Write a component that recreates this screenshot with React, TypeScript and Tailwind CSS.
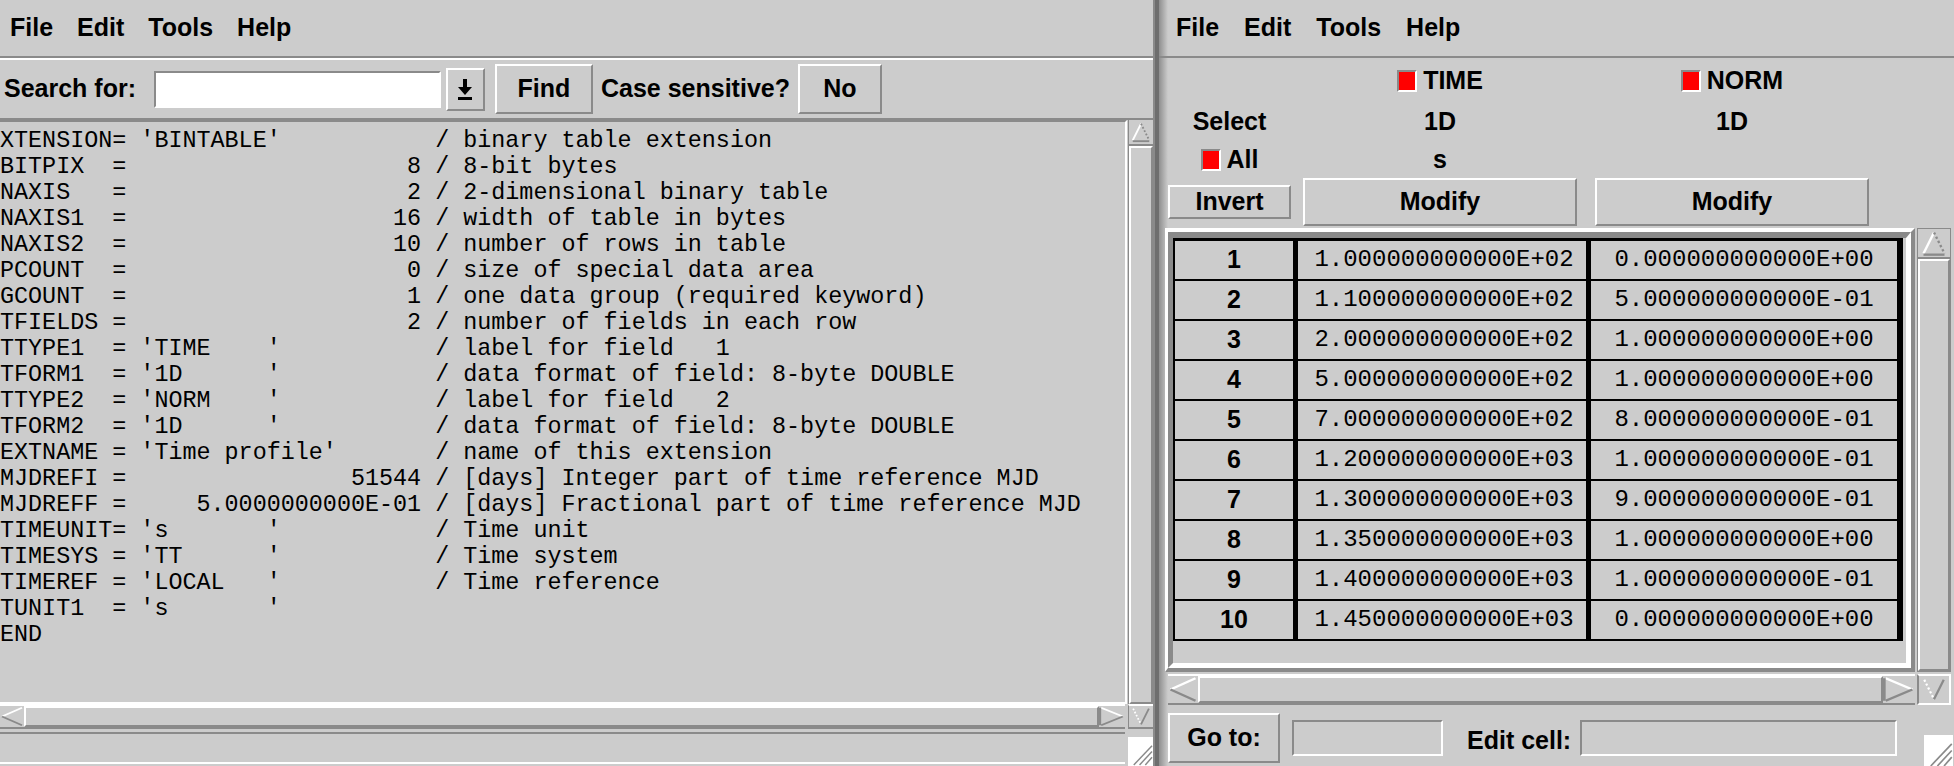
import React from "react";

// FITS header card, formatted like the fv header viewer
function card(key: string, value: string, comment?: string) {
  const v = value.startsWith("'") ? value.padEnd(20) : value.padStart(20);
  const head = key.padEnd(8) + "= " + v;
  return comment ? head + " / " + comment : head;
}

const header = [
  card("XTENSION", "'BINTABLE'", "binary table extension"),
  card("BITPIX", "8", "8-bit bytes"),
  card("NAXIS", "2", "2-dimensional binary table"),
  card("NAXIS1", "16", "width of table in bytes"),
  card("NAXIS2", "10", "number of rows in table"),
  card("PCOUNT", "0", "size of special data area"),
  card("GCOUNT", "1", "one data group (required keyword)"),
  card("TFIELDS", "2", "number of fields in each row"),
  card("TTYPE1", "'TIME    '", "label for field   1"),
  card("TFORM1", "'1D      '", "data format of field: 8-byte DOUBLE"),
  card("TTYPE2", "'NORM    '", "label for field   2"),
  card("TFORM2", "'1D      '", "data format of field: 8-byte DOUBLE"),
  card("EXTNAME", "'Time profile'", "name of this extension"),
  card("MJDREFI", "51544", "[days] Integer part of time reference MJD"),
  card("MJDREFF", "5.0000000000E-01", "[days] Fractional part of time reference MJD"),
  card("TIMEUNIT", "'s       '", "Time unit"),
  card("TIMESYS", "'TT      '", "Time system"),
  card("TIMEREF", "'LOCAL   '", "Time reference"),
  card("TUNIT1", "'s       '"),
  "END",
];

const rows = [
  ["1.000000000000E+02", "0.000000000000E+00"],
  ["1.100000000000E+02", "5.000000000000E-01"],
  ["2.000000000000E+02", "1.000000000000E+00"],
  ["5.000000000000E+02", "1.000000000000E+00"],
  ["7.000000000000E+02", "8.000000000000E-01"],
  ["1.200000000000E+03", "1.000000000000E-01"],
  ["1.300000000000E+03", "9.000000000000E-01"],
  ["1.350000000000E+03", "1.000000000000E+00"],
  ["1.400000000000E+03", "1.000000000000E-01"],
  ["1.450000000000E+03", "0.000000000000E+00"],
];

function UpArrow() {
  return (
    <svg viewBox="0 0 24 24" className="h-full w-full">
      <line x1="3" y1="21" x2="12" y2="3" stroke="#ffffff" strokeWidth="2" />
      <line x1="12" y1="3" x2="21" y2="21" stroke="#8a8a8a" strokeWidth="2" strokeDasharray="2 2" />
      <line x1="3" y1="22" x2="21" y2="22" stroke="#8a8a8a" strokeWidth="2" />
    </svg>
  );
}

function DownArrow() {
  return (
    <svg viewBox="0 0 24 24" className="h-full w-full">
      <line x1="3" y1="3" x2="12" y2="21" stroke="#ffffff" strokeWidth="2" strokeDasharray="2 2" />
      <line x1="12" y1="21" x2="21" y2="3" stroke="#8a8a8a" strokeWidth="2" />
    </svg>
  );
}

function LeftArrow() {
  return (
    <svg viewBox="0 0 24 24" className="h-full w-full" preserveAspectRatio="none">
      <line x1="2" y1="12" x2="22" y2="2" stroke="#ffffff" strokeWidth="2" />
      <line x1="2" y1="12" x2="22" y2="22" stroke="#8a8a8a" strokeWidth="2" />
    </svg>
  );
}

function RightArrow() {
  return (
    <svg viewBox="0 0 24 24" className="h-full w-full" preserveAspectRatio="none">
      <line x1="2" y1="2" x2="22" y2="12" stroke="#ffffff" strokeWidth="2" />
      <line x1="2" y1="22" x2="22" y2="12" stroke="#8a8a8a" strokeWidth="2" />
      <line x1="1" y1="2" x2="1" y2="22" stroke="#8a8a8a" strokeWidth="2" />
    </svg>
  );
}

function Grip() {
  return (
    <svg viewBox="0 0 26 28" className="h-full w-full bg-white">
      <line x1="25" y1="8" x2="6" y2="28" stroke="#8a8a8a" strokeWidth="1.5" />
      <line x1="25" y1="14" x2="12" y2="28" stroke="#8a8a8a" strokeWidth="1.5" />
      <line x1="25" y1="20" x2="18" y2="28" stroke="#8a8a8a" strokeWidth="1.5" />
    </svg>
  );
}

function Check({ label }: { label: string }) {
  return (
    <div className="flex items-center gap-[6px]">
      <div className="h-[22px] w-[20px] border-2 border-t-[#8a8a8a] border-l-[#8a8a8a] border-b-white border-r-white bg-[#ff0000]" />
      <span>{label}</span>
    </div>
  );
}

function LeftWindow() {
  return (
    <div className="flex h-full w-[1155px] flex-col border-r-2 border-[#8a8a8a]">
      <div className="flex h-[58px] shrink-0 items-center gap-[24px] border-b-2 border-[#8a8a8a] pl-[10px]">
        <span>File</span>
        <span>Edit</span>
        <span>Tools</span>
        <span>Help</span>
      </div>

      <div className="flex h-[62px] shrink-0 items-center border-t-2 border-b-2 border-t-white border-b-[#8a8a8a] pl-[4px]">
        <span>Search for:</span>
        <div className="ml-[18px] h-[37px] w-[287px] border-2 border-t-[#8a8a8a] border-l-[#8a8a8a] border-b-white border-r-white bg-white" />
        <div className="ml-[5px] flex h-[43px] w-[39px] items-center justify-center border-2 border-t-white border-l-white border-b-[#8a8a8a] border-r-[#8a8a8a]">
          <svg viewBox="0 0 16 24" className="h-[24px] w-[16px]">
            <rect x="6" y="2" width="4" height="9" fill="#000" />
            <polygon points="1,10 15,10 8,18" fill="#000" />
            <rect x="1" y="20" width="14" height="3" fill="#000" />
          </svg>
        </div>
        <div className="ml-[10px] flex h-[50px] w-[98px] items-center justify-center border-2 border-t-white border-l-white border-b-[#8a8a8a] border-r-[#8a8a8a]">
          Find
        </div>
        <span className="ml-[8px]">Case sensitive?</span>
        <div className="ml-[8px] flex h-[50px] w-[84px] items-center justify-center border-2 border-t-white border-l-white border-b-[#8a8a8a] border-r-[#8a8a8a]">
          No
        </div>
      </div>

      <div className="flex h-[584px] shrink-0">
        <div className="flex-1 border-t-2 border-r-2 border-b-2 border-t-[#8a8a8a] border-r-white border-b-white pt-[6px] font-['Liberation_Mono',monospace] text-[23.4px] font-normal">
          {header.map((line, i) => (
            <div key={i} className="h-[26px] whitespace-pre leading-[26px]">
              {line}
            </div>
          ))}
        </div>
        <div className="ml-[1px] flex w-[25px] flex-col border-l border-[#8a8a8a]">
          <div className="h-[26px] border-b-2 border-[#8a8a8a] px-[1px]">
            <UpArrow />
          </div>
          <div className="flex-1 border-2 border-t-white border-l-white border-b-[#8a8a8a] border-r-[#8a8a8a]" />
        </div>
      </div>

      <div className="flex h-[25px] shrink-0">
        <div className="flex flex-1 border-t-2 border-b-2 border-t-white border-b-[#8a8a8a]">
          <div className="w-[24px]">
            <LeftArrow />
          </div>
          <div className="flex-1 border-2 border-t-white border-l-white border-b-[#8a8a8a] border-r-[#8a8a8a]" />
          <div className="w-[26px]">
            <RightArrow />
          </div>
        </div>
        <div className="ml-[3px] w-[25px] border-t-2 border-b-2 border-l border-t-white border-b-[#8a8a8a] border-l-[#8a8a8a]">
          <DownArrow />
        </div>
      </div>

      <div className="flex flex-1">
        <div className="mt-[3px] mb-[2px] flex-1 border-t-2 border-b-2 border-t-[#8a8a8a] border-b-white" />
        <div className="ml-[3px] mt-[8px] w-[25px]">
          <Grip />
        </div>
      </div>
    </div>
  );
}

function HeaderRow({
  className,
  a,
  b,
  c,
}: {
  className: string;
  a?: React.ReactNode;
  b?: React.ReactNode;
  c?: React.ReactNode;
}) {
  return (
    <div className={"flex items-center pl-[9px] " + className}>
      <div className="flex h-full w-[123px] items-center justify-center">{a}</div>
      <div className="ml-[12px] flex h-full w-[274px] items-center justify-center">{b}</div>
      <div className="ml-[18px] flex h-full w-[274px] items-center justify-center">{c}</div>
    </div>
  );
}

function RightWindow() {
  return (
    <div className="flex h-full flex-1 flex-col bg-[linear-gradient(to_right,#8f8f8f,#cccccc_9px)]">
      <div className="flex h-[58px] shrink-0 items-center gap-[25px] border-b-2 border-[#8a8a8a] pl-[17px]">
        <span>File</span>
        <span>Edit</span>
        <span>Tools</span>
        <span>Help</span>
      </div>

      <HeaderRow className="h-[45px]" b={<Check label="TIME" />} c={<Check label="NORM" />} />
      <HeaderRow className="h-[38px]" a="Select" b="1D" c="1D" />
      <HeaderRow className="h-[37px]" a={<Check label="All" />} b="s" />
      <HeaderRow
        className="h-[48px]"
        a={
          <div className="flex h-[34px] w-full items-center justify-center border-2 border-t-white border-l-white border-b-[#8a8a8a] border-r-[#8a8a8a]">
            Invert
          </div>
        }
        b={
          <div className="flex h-full w-full items-center justify-center border-2 border-t-white border-l-white border-b-[#8a8a8a] border-r-[#8a8a8a]">
            Modify
          </div>
        }
        c={
          <div className="flex h-full w-full items-center justify-center border-2 border-t-white border-l-white border-b-[#8a8a8a] border-r-[#8a8a8a]">
            Modify
          </div>
        }
      />

      <div className="mt-[2px] flex h-[444px] shrink-0">
        <div className="ml-[6px] flex w-[750px] border-t-4 border-l-[3px] border-b-4 border-r-4 border-t-white border-l-white border-b-[#8a8a8a] border-r-[#8a8a8a]">
          <div className="flex flex-1 flex-col border-t-[6px] border-l-[5px] border-b-[5px] border-r-[5px] border-t-[#8a8a8a] border-l-[#8a8a8a] border-b-white border-r-white pr-[3px]">
            <div className="border-t-[3px] border-l-2 border-r-[6px] border-black">
              {rows.map((r, i) => (
                <div key={i} className="flex h-[40px] border-b-2 border-black">
                  <div className="flex w-[123px] items-center justify-center border-r-[5px] border-black">
                    {i + 1}
                  </div>
                  <div className="flex w-[293px] items-center justify-center border-r-[5px] border-black pl-[4px] font-['Liberation_Mono',monospace] text-[24px] font-normal">
                    {r[0]}
                  </div>
                  <div className="flex flex-1 items-center justify-center font-['Liberation_Mono',monospace] text-[24px] font-normal">
                    {r[1]}
                  </div>
                </div>
              ))}
            </div>
          </div>
        </div>
        <div className="ml-[2px] flex w-[34px] flex-col border border-[#8a8a8a]">
          <div className="h-[30px] border-b-2 border-[#8a8a8a] px-[2px]">
            <UpArrow />
          </div>
          <div className="flex-1 border-2 border-t-white border-l-white border-b-[#8a8a8a] border-r-[#8a8a8a]" />
        </div>
      </div>

      <div className="mt-[2px] flex h-[31px] shrink-0">
        <div className="ml-[9px] flex w-[747px] border-t-2 border-b-2 border-t-white border-b-[#8a8a8a]">
          <div className="w-[30px]">
            <LeftArrow />
          </div>
          <div className="flex-1 border-2 border-t-white border-l-white border-b-[#8a8a8a] border-r-[#8a8a8a]" />
          <div className="w-[32px]">
            <RightArrow />
          </div>
        </div>
        <div className="ml-[2px] w-[34px] border-t-2 border-b-2 border-l-2 border-r-2 border-t-white border-b-white border-l-[#8a8a8a] border-r-white px-[2px]">
          <DownArrow />
        </div>
      </div>

      <div className="flex flex-1 items-start pt-[8px]">
        <div className="ml-[9px] flex h-[50px] w-[112px] items-center justify-center border-2 border-t-white border-l-white border-b-[#8a8a8a] border-r-[#8a8a8a]">
          Go to:
        </div>
        <div className="ml-[12px] mt-[7px] h-[36px] w-[151px] border-2 border-t-[#8a8a8a] border-l-[#8a8a8a] border-b-white border-r-white" />
        <span className="ml-[24px] mt-[9px]">Edit cell:</span>
        <div className="ml-[9px] mt-[7px] h-[36px] w-[317px] border-2 border-t-[#8a8a8a] border-l-[#8a8a8a] border-b-white border-r-white" />
        <div className="ml-auto mr-[1px] mt-[22px] h-[31px] w-[29px]">
          <Grip />
        </div>
      </div>
    </div>
  );
}

export default function App() {
  return (
    <div className="flex h-[766px] w-[1954px] overflow-hidden bg-[#cccccc] font-['Liberation_Sans',Arial,sans-serif] text-[25px] font-bold text-black">
      <LeftWindow />
      <div className="h-full w-[4px] bg-[#6e6e6e]" />
      <RightWindow />
    </div>
  );
}
